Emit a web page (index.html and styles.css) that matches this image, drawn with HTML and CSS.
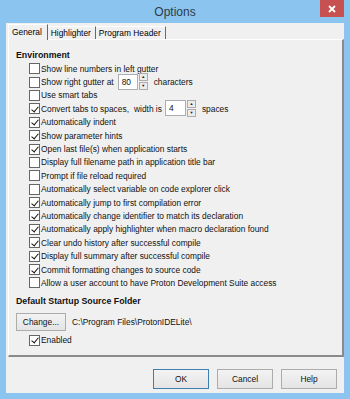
FILE: index.html
```html
<!DOCTYPE html>
<html lang="en">

<head>
    <meta charset="UTF-8">
    <title>Options</title>
    <link rel="stylesheet" href="styles.css">
</head>

<body>
    <div class="window">
        <div class="titlebar">
            <span class="title">Options</span>
            <div class="close-btn">
                <svg width="8" height="8" viewBox="0 0 8 8"><path d="M1 1 L7 7 M7 1 L1 7" stroke="#fff" stroke-width="1.8"/></svg>
            </div>
        </div>

        <div class="client">
            <div class="tabs">
                <div class="tab active">General</div>
                <div class="tab">Highlighter</div>
                <div class="tab">Program Header</div>
            </div>

            <div class="panel">
                <div class="heading">Environment</div>

                <div class="options">
                    <div class="opt"><span class="cb"></span>Show line numbers in left gutter</div>
                    <div class="opt">
                        <span class="cb"></span>Show right gutter at
                        <span class="spin spin-gutter"><span class="spin-input">80</span><span class="spin-arrows"><span class="arr">▲</span><span class="arr">▼</span></span></span>
                        <span class="after">characters</span>
                    </div>
                    <div class="opt"><span class="cb"></span>Use smart tabs</div>
                    <div class="opt">
                        <span class="cb on"></span>Convert tabs to spaces,
                        <span class="mid">width is</span>
                        <span class="spin spin-width"><span class="spin-input">4</span><span class="spin-arrows"><span class="arr">▲</span><span class="arr">▼</span></span></span>
                        <span class="after">spaces</span>
                    </div>
                    <div class="opt"><span class="cb on"></span>Automatically indent</div>
                    <div class="opt"><span class="cb on"></span>Show parameter hints</div>
                    <div class="opt"><span class="cb on"></span>Open last file(s) when application starts</div>
                    <div class="opt"><span class="cb"></span>Display full filename path in application title bar</div>
                    <div class="opt"><span class="cb"></span>Prompt if file reload required</div>
                    <div class="opt"><span class="cb"></span>Automatically select variable on code explorer click</div>
                    <div class="opt"><span class="cb on"></span>Automatically jump to first compilation error</div>
                    <div class="opt"><span class="cb on"></span>Automatically change identifier to match its declaration</div>
                    <div class="opt"><span class="cb on"></span>Automatically apply highlighter when macro declaration found</div>
                    <div class="opt"><span class="cb on"></span>Clear undo history after successful compile</div>
                    <div class="opt"><span class="cb on"></span>Display full summary after successful compile</div>
                    <div class="opt"><span class="cb on"></span>Commit formatting changes to source code</div>
                    <div class="opt"><span class="cb"></span>Allow a user account to have Proton Development Suite access</div>
                </div>

                <div class="heading heading-folder">Default Startup Source Folder</div>
                <div class="folder-row">
                    <div class="btn btn-change">Change...</div>
                    <span class="path">C:\Program Files\ProtonIDELite\</span>
                </div>
                <div class="opt opt-enabled"><span class="cb on"></span>Enabled</div>
            </div>

            <div class="footer">
                <div class="btn btn-default">OK</div>
                <div class="btn">Cancel</div>
                <div class="btn">Help</div>
            </div>
        </div>
    </div>
</body>

</html>
```

FILE: styles.css
```css
* {
    margin: 0;
    padding: 0;
    box-sizing: border-box;
}

body {
    font-family: "Liberation Sans", Arial, sans-serif;
    font-size: 8.4px;
    color: #000;
    background: #8cc4f0;
}

.window {
    width: 350px;
    height: 399px;
    background: #8cc4f0;
    padding: 0 6px 6px 6px;
    display: flex;
    flex-direction: column;
}

.titlebar {
    height: 23px;
    position: relative;
    display: flex;
    justify-content: center;
    align-items: center;
}

.title {
    font-size: 12px;
    color: #2d3b48;
    margin-top: 1px;
}

.close-btn {
    position: absolute;
    right: 0;
    top: 0;
    width: 24px;
    height: 17px;
    background: #c75050;
    display: flex;
    justify-content: center;
    align-items: center;
}

.client {
    flex: 1;
    background: #f0f0f0;
    display: flex;
    flex-direction: column;
    padding-left: 2px;
}

/* tab strip */
.tabs {
    height: 16px;
    display: flex;
    align-items: flex-end;
}

.tab {
    height: 13px;
    padding: 0 4px 0 3px;
    border-top: 1px solid #fff;
    border-right: 1px solid #696969;
    line-height: 12px;
    background: #f0f0f0;
}

.tab.active {
    height: 16px;
    margin-bottom: -1px;
    position: relative;
    z-index: 1;
    border-left: 1px solid #fff;
    padding: 0 5px 0 3px;
    line-height: 14px;
}

.panel {
    height: 318px;
    border-top: 1px solid #fff;
    border-left: 1px solid #fff;
    border-right: 2px solid #8a8a8a;
    border-bottom: 2px solid #8a8a8a;
    padding: 9px 0 0 7px;
}

.heading {
    font-weight: bold;
    font-size: 8.8px;
    line-height: 13px;
    color: #111;
}

.heading-folder {
    margin-top: 5.5px;
}

.opt {
    height: 13.4px;
    display: flex;
    align-items: center;
    padding-left: 13px;
    white-space: nowrap;
    color: #111;
}

.cb {
    width: 11px;
    height: 11px;
    border: 1px solid #666;
    background: #fff;
    margin-right: 1px;
    flex-shrink: 0;
    position: relative;
}

.cb.on::after {
    content: "";
    position: absolute;
    left: 2.5px;
    top: 0.5px;
    width: 3px;
    height: 6px;
    border-right: 1.5px solid #111;
    border-bottom: 1.5px solid #111;
    transform: rotate(40deg);
}

.spin {
    display: flex;
    align-items: center;
    height: 16px;
    margin-top: -1px;
}

.spin-gutter {
    margin-left: 4px;
}

.spin-width {
    margin-left: 3px;
}

.spin-input {
    height: 16px;
    background: #fff;
    border: 1px solid #abadb3;
    padding: 2px 0 0 3px;
    color: #111;
}

.spin-gutter .spin-input {
    width: 20px;
}

.spin-width .spin-input {
    width: 21px;
}

.spin-arrows {
    display: flex;
    flex-direction: column;
    margin-left: 1px;
    gap: 1px;
}

.arr {
    width: 9px;
    height: 8px;
    border: 1px solid #acacac;
    background: #ececec;
    font-size: 4px;
    line-height: 6px;
    text-align: center;
    color: #222;
}

.mid {
    margin-left: 5px;
}

.after {
    margin-left: 6px;
}

.folder-row {
    display: flex;
    align-items: center;
    margin-top: 4.5px;
}

.path {
    margin-left: 6px;
    color: #111;
}

.opt-enabled {
    margin-top: 3px;
}

.btn {
    height: 18px;
    padding: 0 6px;
    border: 1px solid #acacac;
    background: linear-gradient(#f3f3f3, #e4e4e4);
    display: flex;
    align-items: center;
    justify-content: center;
    color: #111;
}

.btn-change {
    width: 50px;
}

.footer {
    flex: 1;
    display: flex;
    justify-content: flex-end;
    gap: 8px;
    padding: 12px 7px 0 0;
}

.footer .btn {
    width: 56px;
    height: 20px;
}

.footer .btn-default {
    border-color: #3c7fb1;
}
```
